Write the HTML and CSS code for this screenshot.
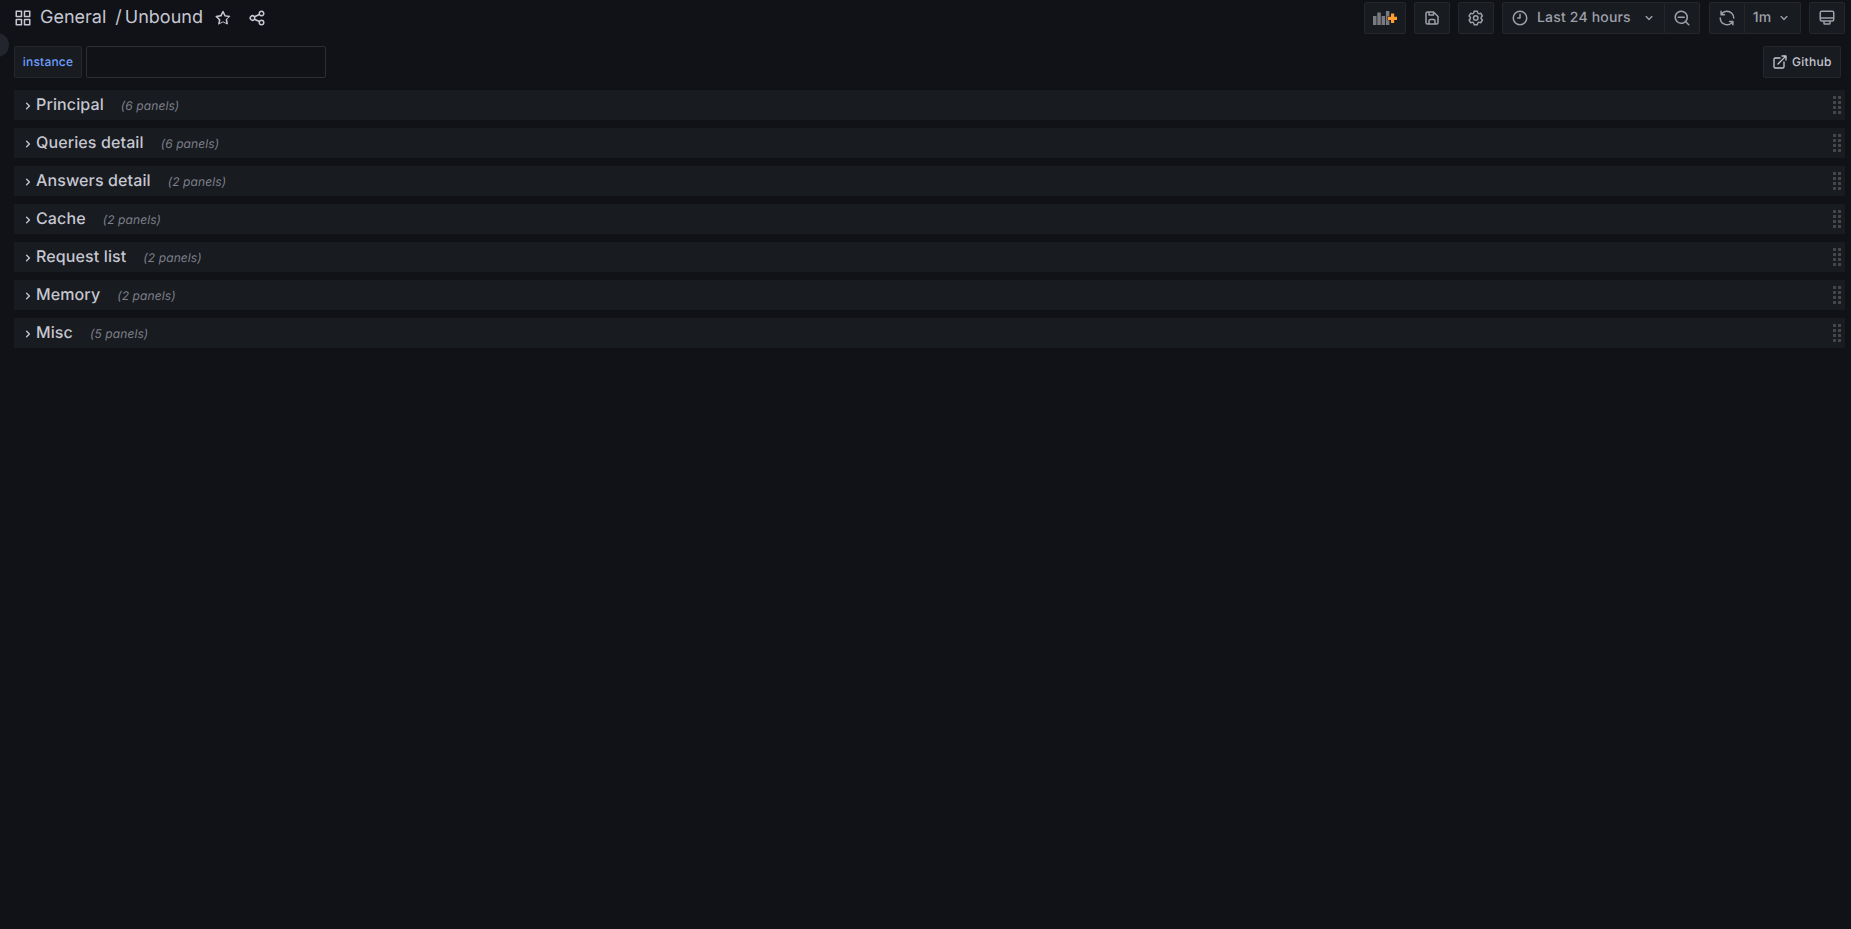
FILE: index.html
```html
<!DOCTYPE html>
<html>
  <head>
    <title>General / Unbound</title>
    <link rel="stylesheet" href="styles.css">
  </head>

  <body>
    <div class="menu-toggle"></div>

    <div class="toolbar">
      <svg class="icon icon-apps" viewBox="0 0 24 24"><path d="M10,13H3a1,1,0,0,0-1,1v7a1,1,0,0,0,1,1h7a1,1,0,0,0,1-1V14A1,1,0,0,0,10,13ZM9,20H4V15H9ZM21,2H14a1,1,0,0,0-1,1v7a1,1,0,0,0,1,1h7a1,1,0,0,0,1-1V3A1,1,0,0,0,21,2ZM20,9H15V4h5Zm1,4H14a1,1,0,0,0-1,1v7a1,1,0,0,0,1,1h7a1,1,0,0,0,1-1V14A1,1,0,0,0,21,13Zm-1,7H15V15h5ZM10,2H3A1,1,0,0,0,2,3v7a1,1,0,0,0,1,1h7a1,1,0,0,0,1-1V3A1,1,0,0,0,10,2ZM9,9H4V4H9Z"/></svg>
      <span class="crumb">General</span>
      <span class="crumb crumb-slash">/</span>
      <span class="crumb crumb-title">Unbound</span>
      <svg class="icon icon-star" viewBox="0 0 24 24"><path d="M22,9.67A1,1,0,0,0,21.14,9l-5.69-.83L12.9,3a1,1,0,0,0-1.8,0L8.55,8.16,2.86,9a1,1,0,0,0-.81.68,1,1,0,0,0,.25,1l4.13,4-1,5.68A1,1,0,0,0,6.9,20.44L12,17.77l5.1,2.67a.93.93,0,0,0,.46.12,1,1,0,0,0,.59-.19,1,1,0,0,0,.4-1l-1-5.68,4.13-4A1,1,0,0,0,22,9.67Zm-6.15,4a1,1,0,0,0-.29.88l.72,4.2-3.76-2a1.06,1.06,0,0,0-.94,0l-3.76,2,.72-4.2a1,1,0,0,0-.29-.88l-3-3,4.21-.61a1,1,0,0,0,.76-.55L12,5.7l1.88,3.82a1,1,0,0,0,.76.55l4.21.61Z"/></svg>
      <svg class="icon icon-share" viewBox="0 0 24 24"><path d="M18,14a4,4,0,0,0-3.08,1.48l-5.1-2.35a3.64,3.64,0,0,0,0-2.26l5.1-2.35A4,4,0,1,0,14,6a4.17,4.17,0,0,0,.07.71L8.79,9.14a4,4,0,1,0,0,5.72l5.28,2.43A4.17,4.17,0,0,0,14,18a4,4,0,1,0,4-4ZM18,4a2,2,0,1,1-2,2A2,2,0,0,1,18,4ZM6,14a2,2,0,1,1,2-2A2,2,0,0,1,6,14Zm12,6a2,2,0,1,1,2-2A2,2,0,0,1,18,20Z"/></svg>

      <div class="toolbar-right">
        <div class="btn btn-add">
          <svg class="add-panel" viewBox="0 0 24 14">
            <rect x="0" y="5" width="3.5" height="9" fill="#7a7b80"/>
            <rect x="4.300" y="1.500" width="3.500" height="12.500" fill="#7a7b80"/>
            <rect x="8.600" y="5" width="3.500" height="9" fill="#7a7b80"/>
            <rect x="12.900" y="0" width="3.500" height="14" fill="#7a7b80"/>
            <path d="M18,2.500h3.200v3.200h2.800v3.200h-2.800v3.200h-3.200v-3.200h-3.200v-3.200h3.200Z" fill="#ff9d2e" stroke="#181b1f" stroke-width="1" paint-order="stroke"/>
          </svg>
        </div>
        <div class="btn btn-icon">
          <svg class="icon" viewBox="0 0 24 24"><path d="M20.71,9.29l-6-6a1,1,0,0,0-.32-.21A1.09,1.09,0,0,0,14,3H6A3,3,0,0,0,3,6V18a3,3,0,0,0,3,3H18a3,3,0,0,0,3-3V10A1,1,0,0,0,20.71,9.29ZM9,5h4V7H9Zm6,14H9V16a1,1,0,0,1,1-1h4a1,1,0,0,1,1,1Zm4-1a1,1,0,0,1-1,1H17V16a3,3,0,0,0-3-3H10a3,3,0,0,0-3,3v3H6a1,1,0,0,1-1-1V6A1,1,0,0,1,6,5H7V8A1,1,0,0,0,8,9h6a1,1,0,0,0,1-1V6.41l4,4Z"/></svg>
        </div>
        <div class="btn btn-icon">
          <svg class="icon" viewBox="0 0 24 24"><path d="M19.9,12.66a1,1,0,0,1,0-1.32L21.18,9.9a1,1,0,0,0,.12-1.17l-2-3.46a1,1,0,0,0-1.07-.48l-1.88.38a1,1,0,0,1-1.15-.66l-.61-1.83A1,1,0,0,0,13.64,2h-4a1,1,0,0,0-1,.68L8.08,4.51a1,1,0,0,1-1.15.66L5,4.79A1,1,0,0,0,4,5.27L2,8.73A1,1,0,0,0,2.1,9.9l1.27,1.44a1,1,0,0,1,0,1.32L2.1,14.1A1,1,0,0,0,2,15.27l2,3.46a1,1,0,0,0,1.07.48l1.88-.38a1,1,0,0,1,1.15.66l.61,1.83a1,1,0,0,0,1,.68h4a1,1,0,0,0,.95-.68l.61-1.83a1,1,0,0,1,1.15-.66l1.88.38a1,1,0,0,0,1.07-.48l2-3.46a1,1,0,0,0-.12-1.17ZM18.41,14l.8.9-1.28,2.22-1.18-.24a3,3,0,0,0-3.45,2L12.92,20H10.36L10,18.86a3,3,0,0,0-3.45-2l-1.18.24L4.07,14.89l.8-.9a3,3,0,0,0,0-4l-.8-.9L5.35,6.89l1.18.24a3,3,0,0,0,3.45-2L10.36,4h2.56l.38,1.14a3,3,0,0,0,3.45,2l1.18-.24,1.28,2.22-.8.9A3,3,0,0,0,18.41,14ZM11.64,8a4,4,0,1,0,4,4A4,4,0,0,0,11.64,8Zm0,6a2,2,0,1,1,2-2A2,2,0,0,1,11.64,14Z"/></svg>
        </div>
        <div class="btn-group btn-group-time">
          <div class="btn btn-time">
            <svg class="icon" viewBox="0 0 24 24"><path d="M12,2A10,10,0,1,0,22,12,10,10,0,0,0,12,2Zm0,18a8,8,0,1,1,8-8A8,8,0,0,1,12,20Zm0-14a1,1,0,0,0-1,1v4H9a1,1,0,0,0,0,2h3a1,1,0,0,0,1-1V7A1,1,0,0,0,12,6Z"/></svg>
            <span class="btn-text">Last 24 hours</span>
            <svg class="caret" viewBox="0 0 24 24"><path d="M17,9.17a1,1,0,0,0-1.41,0L12,12.71,8.46,9.17a1,1,0,0,0-1.41,0,1,1,0,0,0,0,1.42l4.24,4.24a1,1,0,0,0,1.42,0L17,10.59A1,1,0,0,0,17,9.17Z"/></svg>
          </div>
          <div class="btn btn-icon">
            <svg class="icon" viewBox="0 0 24 24"><path d="M21.71,20.29,18,16.61A9,9,0,1,0,16.61,18l3.68,3.68a1,1,0,0,0,1.42,0A1,1,0,0,0,21.71,20.29ZM11,18a7,7,0,1,1,7-7A7,7,0,0,1,11,18ZM15,10H7a1,1,0,0,0,0,2h8a1,1,0,0,0,0-2Z"/></svg>
          </div>
        </div>
        <div class="btn-group btn-group-refresh">
          <div class="btn btn-icon">
            <svg class="icon" viewBox="0 0 24 24"><path d="M19.91,15.51H15.38a1,1,0,0,0,0,2h2.4A8,8,0,0,1,4,12a1,1,0,0,0-2,0,10,10,0,0,0,16.88,7.23V21a1,1,0,0,0,2,0V16.5A1,1,0,0,0,19.91,15.51ZM12,2A10,10,0,0,0,5.12,4.77V3a1,1,0,0,0-2,0V7.5a1,1,0,0,0,1,1h4.5a1,1,0,0,0,0-2H6.220A8,8,0,0,1,20,12a1,1,0,0,0,2,0A10,10,0,0,0,12,2Z"/></svg>
          </div>
          <div class="btn btn-interval">
            <span class="btn-text">1m</span>
            <svg class="caret" viewBox="0 0 24 24"><path d="M17,9.17a1,1,0,0,0-1.41,0L12,12.71,8.46,9.17a1,1,0,0,0-1.41,0,1,1,0,0,0,0,1.42l4.24,4.24a1,1,0,0,0,1.42,0L17,10.59A1,1,0,0,0,17,9.17Z"/></svg>
          </div>
        </div>
        <div class="btn btn-icon">
          <svg class="icon" viewBox="0 0 24 24"><path d="M19,2H5A3,3,0,0,0,2,5V14a3,3,0,0,0,3,3H7v2a2,2,0,0,0,2,2h6a2,2,0,0,0,2-2V17h2a3,3,0,0,0,3-3V5A3,3,0,0,0,19,2ZM15,19H9V17h6ZM20,14a1,1,0,0,1-1,1H5a1,1,0,0,1-1-1V13H20Zm0-3H4V5A1,1,0,0,1,5,4H19a1,1,0,0,1,1,1Z"/></svg>
        </div>
      </div>
    </div>

    <div class="submenu">
      <label class="var-label">instance</label>
      <div class="var-input"></div>
      <div class="btn btn-link">
        <svg class="link-icon" viewBox="0 0 24 24"><path d="M18,10.82a1,1,0,0,0-1,1V19a1,1,0,0,1-1,1H5a1,1,0,0,1-1-1V8A1,1,0,0,1,5,7h7.18a1,1,0,0,0,0-2H5A3,3,0,0,0,2,8V19a3,3,0,0,0,3,3H16a3,3,0,0,0,3-3V11.82A1,1,0,0,0,18,10.82Zm3.92-8.2a1,1,0,0,0-.54-.54A1,1,0,0,0,21,2H15a1,1,0,0,0,0,2h3.59L8.29,14.29a1,1,0,0,0,0,1.42,1,1,0,0,0,1.42,0L20,5.41V9a1,1,0,0,0,2,0V3A1,1,0,0,0,21.92,2.62Z"/></svg>
        <span class="link-text">Github</span>
      </div>
    </div>

    <div class="rows">
      <div class="row"><svg class="arrow" viewBox="0 0 24 24"><path d="M14.83,11.29,10.59,7.05a1,1,0,0,0-1.42,0,1,1,0,0,0,0,1.41L12.71,12,9.17,15.54a1,1,0,0,0,0,1.41,1,1,0,0,0,.71.29,1,1,0,0,0,.71-.29l4.24-4.24A1,1,0,0,0,14.83,11.29Z"/></svg><span class="row-title">Principal</span><span class="row-count">(6 panels)</span><div class="grip"><i></i><i></i><i></i><i></i><i></i><i></i><i></i><i></i></div></div>
      <div class="row"><svg class="arrow" viewBox="0 0 24 24"><path d="M14.83,11.29,10.59,7.05a1,1,0,0,0-1.42,0,1,1,0,0,0,0,1.41L12.71,12,9.17,15.54a1,1,0,0,0,0,1.41,1,1,0,0,0,.71.29,1,1,0,0,0,.71-.29l4.24-4.24A1,1,0,0,0,14.83,11.29Z"/></svg><span class="row-title">Queries detail</span><span class="row-count">(6 panels)</span><div class="grip"><i></i><i></i><i></i><i></i><i></i><i></i><i></i><i></i></div></div>
      <div class="row"><svg class="arrow" viewBox="0 0 24 24"><path d="M14.83,11.29,10.59,7.05a1,1,0,0,0-1.42,0,1,1,0,0,0,0,1.41L12.71,12,9.17,15.54a1,1,0,0,0,0,1.41,1,1,0,0,0,.71.29,1,1,0,0,0,.71-.29l4.24-4.24A1,1,0,0,0,14.83,11.29Z"/></svg><span class="row-title">Answers detail</span><span class="row-count">(2 panels)</span><div class="grip"><i></i><i></i><i></i><i></i><i></i><i></i><i></i><i></i></div></div>
      <div class="row"><svg class="arrow" viewBox="0 0 24 24"><path d="M14.83,11.29,10.59,7.05a1,1,0,0,0-1.42,0,1,1,0,0,0,0,1.41L12.71,12,9.17,15.54a1,1,0,0,0,0,1.41,1,1,0,0,0,.71.29,1,1,0,0,0,.71-.29l4.24-4.24A1,1,0,0,0,14.83,11.29Z"/></svg><span class="row-title">Cache</span><span class="row-count">(2 panels)</span><div class="grip"><i></i><i></i><i></i><i></i><i></i><i></i><i></i><i></i></div></div>
      <div class="row"><svg class="arrow" viewBox="0 0 24 24"><path d="M14.83,11.29,10.59,7.05a1,1,0,0,0-1.42,0,1,1,0,0,0,0,1.41L12.71,12,9.17,15.54a1,1,0,0,0,0,1.41,1,1,0,0,0,.71.29,1,1,0,0,0,.71-.29l4.24-4.24A1,1,0,0,0,14.83,11.29Z"/></svg><span class="row-title">Request list</span><span class="row-count">(2 panels)</span><div class="grip"><i></i><i></i><i></i><i></i><i></i><i></i><i></i><i></i></div></div>
      <div class="row"><svg class="arrow" viewBox="0 0 24 24"><path d="M14.83,11.29,10.59,7.05a1,1,0,0,0-1.42,0,1,1,0,0,0,0,1.41L12.71,12,9.17,15.54a1,1,0,0,0,0,1.41,1,1,0,0,0,.71.29,1,1,0,0,0,.71-.29l4.24-4.24A1,1,0,0,0,14.83,11.29Z"/></svg><span class="row-title">Memory</span><span class="row-count">(2 panels)</span><div class="grip"><i></i><i></i><i></i><i></i><i></i><i></i><i></i><i></i></div></div>
      <div class="row"><svg class="arrow" viewBox="0 0 24 24"><path d="M14.83,11.29,10.59,7.05a1,1,0,0,0-1.42,0,1,1,0,0,0,0,1.41L12.71,12,9.17,15.54a1,1,0,0,0,0,1.41,1,1,0,0,0,.71.29,1,1,0,0,0,.71-.29l4.24-4.24A1,1,0,0,0,14.83,11.29Z"/></svg><span class="row-title">Misc</span><span class="row-count">(5 panels)</span><div class="grip"><i></i><i></i><i></i><i></i><i></i><i></i><i></i><i></i></div></div>
    </div>
  </body>
</html>
```

FILE: styles.css
```css
html,
body {
  height: 100%;
}

body {
  margin: 0;
  overflow: hidden;
  background: #111217;
  color: #ccccdc;
  font-family: Inter, "Noto Sans", sans-serif;
  font-size: 14px;
  text-rendering: geometricPrecision;
}

.icon {
  width: 18px;
  height: 18px;
  fill: #9fa0ab;
  flex: none;
}

.menu-toggle {
  position: absolute;
  left: -15px;
  top: 33px;
  width: 24px;
  height: 24px;
  border-radius: 50%;
  background: #22252b;
}

.toolbar {
  display: flex;
  align-items: center;
  height: 32px;
  padding: 2px 6px 0 14px;
}

.icon-apps {
  margin-right: 8px;
  fill: #c6c7d2;
}

.crumb {
  padding-bottom: 1px;
  font-size: 18px;
  color: #c6c7d2;
}

.crumb-slash {
  margin-left: 9px;
}

.crumb-title {
  margin-left: 3px;
}

.icon-star {
  margin-left: 11px;
  fill: #c6c7d2;
}

.icon-share {
  margin-left: 16px;
  fill: #c6c7d2;
}

.toolbar-right {
  display: flex;
  gap: 8px;
  margin-left: auto;
}

.btn {
  display: flex;
  align-items: center;
  justify-content: center;
  box-sizing: border-box;
  height: 32px;
  background: #181b1f;
  border: 1px solid #25272d;
  border-radius: 2px;
  color: #9fa0ab;
}

.btn-icon {
  width: 36px;
}

.btn-add {
  width: 42px;
}

.add-panel {
  width: 24px;
  height: 14px;
}

.btn-group {
  display: flex;
}

.btn-group .btn + .btn {
  margin-left: -1px;
}

.btn-group-time {
  margin-right: 1px;
}

.btn-time {
  width: 163px;
  justify-content: flex-start;
  padding-left: 8px;
  border-radius: 2px 0 0 2px;
}

.btn-text {
  margin-left: 8px;
  padding-bottom: 1px;
  font-weight: 500;
  letter-spacing: 0.18px;
}

.btn-interval {
  width: 57px;
  border-radius: 0 2px 2px 0;
}

.btn-interval .btn-text {
  margin-left: 0;
}

.caret {
  width: 16px;
  height: 16px;
  margin-left: 5px;
  fill: #9fa0ab;
  flex: none;
}

.btn-time .caret {
  margin-left: 10px;
}

.submenu {
  display: flex;
  align-items: center;
  height: 32px;
  margin-top: 12px;
  padding: 0 10px 0 14px;
}

.var-label {
  display: flex;
  align-items: center;
  justify-content: center;
  box-sizing: border-box;
  width: 68px;
  height: 32px;
  padding-bottom: 1px;
  background: #181b1f;
  border: 1px solid #25272d;
  border-radius: 2px;
  color: #6e9fff;
  font-size: 12px;
  font-weight: 500;
  letter-spacing: 0.2px;
}

.var-input {
  box-sizing: border-box;
  width: 240px;
  height: 32px;
  margin-left: 4px;
  background: #111217;
  border: 1px solid #2c2e33;
  border-radius: 2px;
}

.btn-link {
  justify-content: flex-start;
  width: 78px;
  margin-left: auto;
  padding-left: 8px;
  color: #c6c7d2;
  font-size: 12px;
  font-weight: 500;
}

.link-icon {
  width: 16px;
  height: 16px;
  margin-right: 4px;
  fill: #c6c7d2;
  flex: none;
}

.link-text {
  padding-bottom: 2px;
  letter-spacing: 0.3px;
}

.rows {
  display: flex;
  flex-direction: column;
  gap: 8px;
  margin-top: 12px;
  padding: 0 6px 0 14px;
}

.row {
  display: flex;
  align-items: center;
  height: 30px;
  padding-left: 6px;
  background: #181b1f;
}

.arrow {
  width: 16px;
  height: 16px;
  margin-top: 2px;
  fill: #c6c7d2;
  flex: none;
}

.row-title {
  padding-bottom: 2px;
  font-size: 16px;
  font-weight: 500;
  color: #c6c7d2;
  letter-spacing: 0.12px;
}

.row-count {
  margin-left: 17px;
  font-size: 12px;
  font-style: italic;
  color: #7e7f8b;
  letter-spacing: 0.1px;
}

.grip {
  display: grid;
  grid-template-columns: 3px 3px;
  grid-auto-rows: 3px;
  column-gap: 2.33px;
  row-gap: 2.33px;
  margin-left: auto;
  margin-right: 4px;
}

.grip i {
  background: #45464a;
}
```
